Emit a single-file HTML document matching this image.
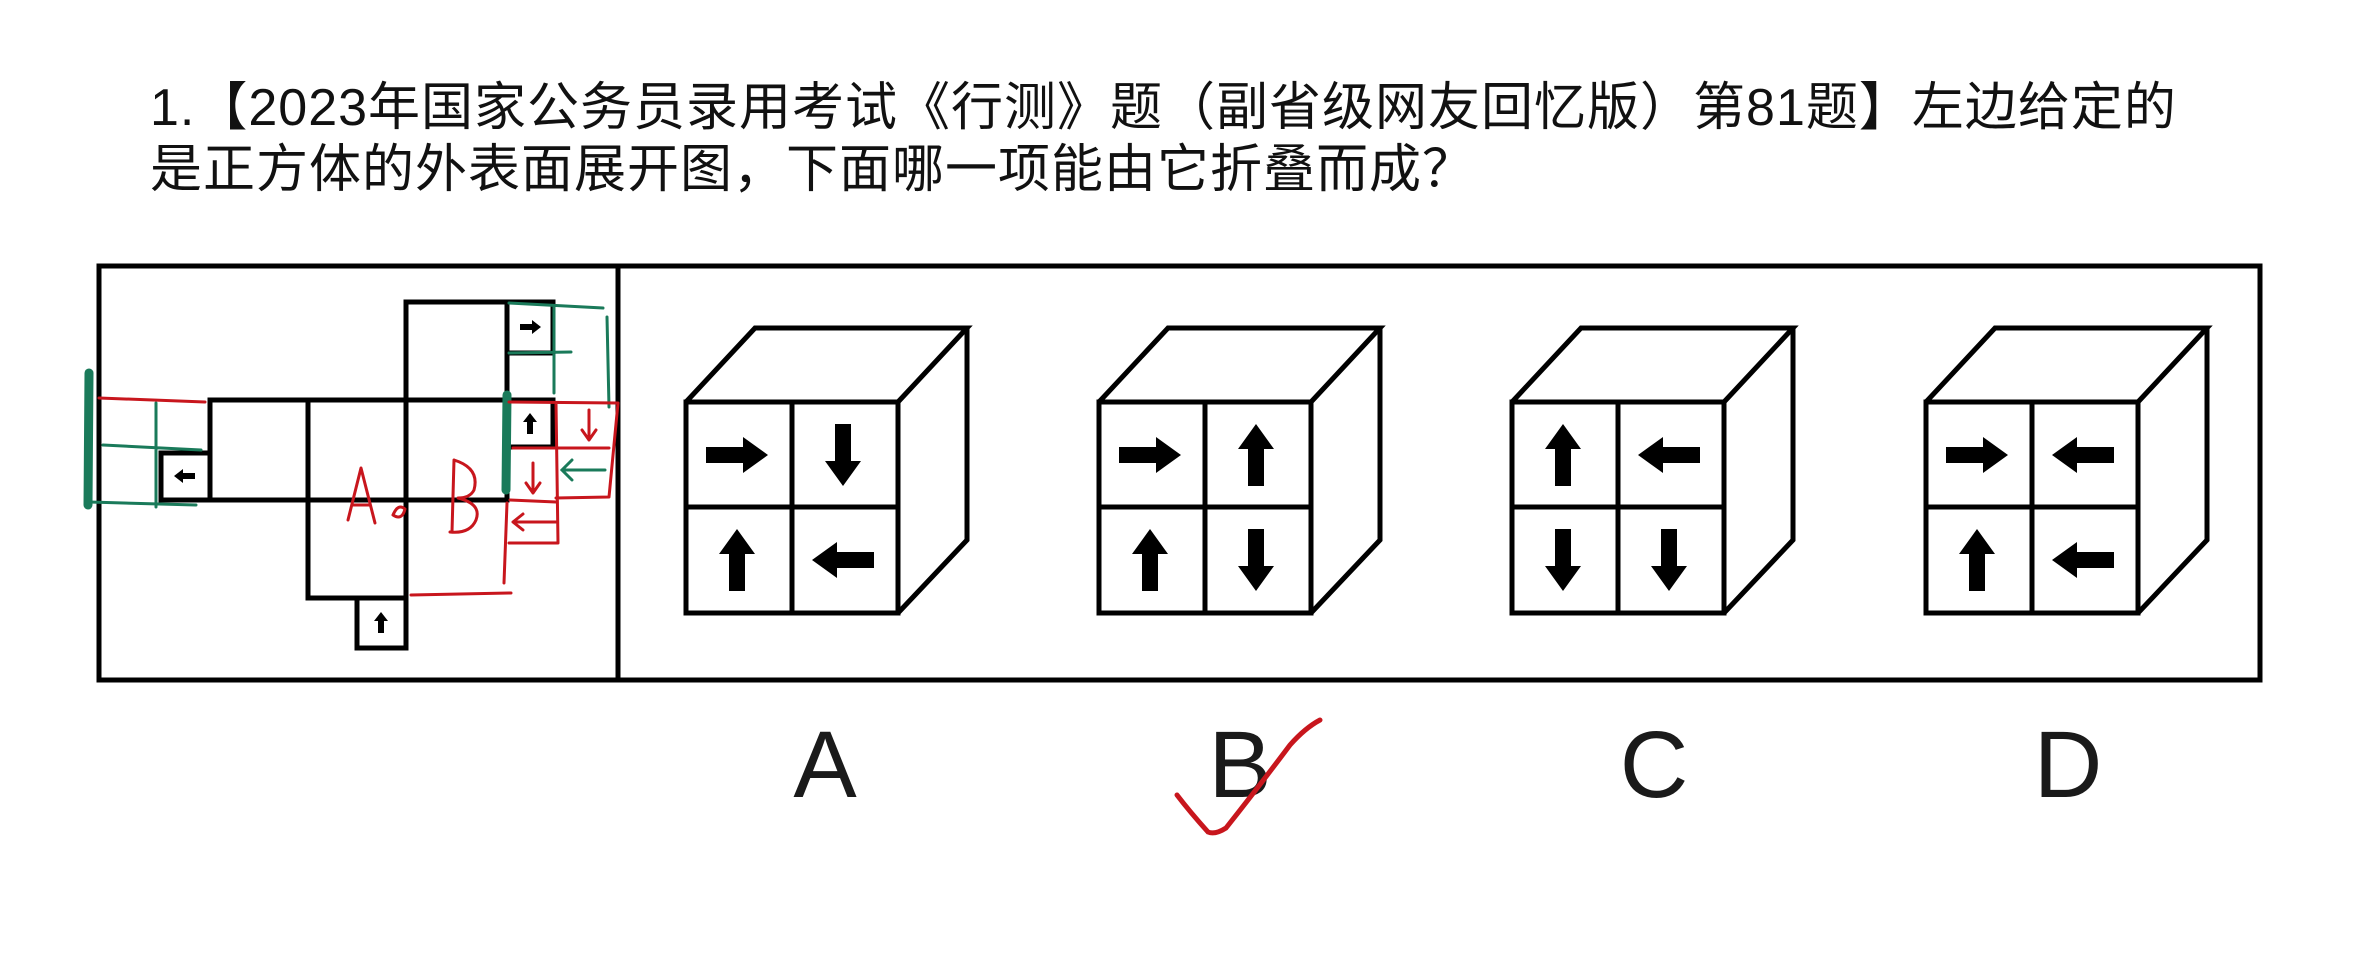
<!DOCTYPE html>
<html><head><meta charset="utf-8"><style>
html,body{margin:0;padding:0;background:#fff;width:2356px;height:970px;overflow:hidden}
.t{position:absolute;left:150px;font-family:"Liberation Sans","Noto Sans CJK SC",sans-serif;font-size:52px;color:#111;white-space:nowrap;line-height:62px;letter-spacing:1px}
svg{position:absolute;left:0;top:0}
.lbl{font-family:"Liberation Sans",sans-serif;font-size:95px;fill:#1a1a1a}
</style></head><body>
<div class="t" style="top:77px">1.【2023年国家公务员录用考试《行测》题（副省级网友回忆版）第81题】左边给定的</div>
<div class="t" style="top:139px">是正方体的外表面展开图，下面哪一项能由它折叠而成？</div>
<svg width="2356" height="970" viewBox="0 0 2356 970">
<defs>
<polygon id="ar" points="-31,-8 6,-8 6,-18 31,0 6,18 6,8 -31,8" fill="#000"/>
<polygon id="sa" points="-10,-3 2,-3 2,-7 11,0 2,7 2,3 -10,3" fill="#000"/>
</defs>
<g fill="none" stroke="#000" stroke-width="5">
<rect x="99" y="266" width="2161" height="414"/>
<line x1="618" y1="266" x2="618" y2="680"/>
<rect x="210" y="400" width="98" height="100"/>
<rect x="308" y="400" width="98" height="100"/>
<rect x="406" y="400" width="101" height="100"/>
<rect x="406" y="302" width="101" height="98"/>
<rect x="308" y="500" width="98" height="98"/>
<rect x="357" y="598" width="49" height="50"/>
<rect x="161" y="453" width="49" height="47"/>
<rect x="507" y="302" width="46" height="51"/>
<rect x="507" y="400" width="46" height="47"/>
</g>
<use href="#sa" transform="translate(185,476) rotate(180)"/>
<use href="#sa" transform="translate(530,327)"/>
<use href="#sa" transform="translate(530,424) rotate(-90)"/>
<use href="#sa" transform="translate(381,623) rotate(-90)"/>
<g fill="none" stroke="#1a7a5a" stroke-linecap="round">
<path d="M89,373 L88,505" stroke-width="9"/>
<path d="M507,395 L506,490" stroke-width="9"/>
<path d="M103,445 L201,450 M156,403 L156,507 M89,502 L196,505 M509,303 L603,308 M554,307 L554,393 M509,353 L571,352 M607,317 L609,407 M562,470 L605,470 M572,460 L562,470 L572,480" stroke-width="3"/>
</g>
<g fill="none" stroke="#c8161d" stroke-width="3" stroke-linecap="round" stroke-linejoin="round">
<path d="M99,398 L205,402"/>
<path d="M509,402 L618,403 L609,497 L556,498 M513,448 L609,448 M556,403 L558,543 L509,543 M507,503 L504,583 M411,595 L511,593 M510,500 L556,502"/>
<path d="M589,410 L589,440 M582,430 L589,440 L596,430"/>
<path d="M533,463 L533,493 M526,483 L533,493 L540,483"/>
<path d="M513,522 L556,522 M523,514 L513,522 L523,530"/>
<path d="M348,520 L361,468 L375,523 M352,505 L370,505"/>
<path d="M393,515 q5,-12 12,-6 q-3,12 -12,6"/>
<path d="M454,460 L452,532 M454,460 q26,8 20,30 q-4,8 -16,8 q24,6 18,22 q-6,14 -26,12"/>
</g>
<g fill="none" stroke="#000" stroke-width="5">
<g transform="translate(686,0)"><rect x="0" y="402" width="212" height="211"/><path d="M106,402 V613 M0,507 H212 M0,402 L69,328 H281 L212,402 M281,328 V540 L212,613"/></g>
<g transform="translate(1099,0)"><rect x="0" y="402" width="212" height="211"/><path d="M106,402 V613 M0,507 H212 M0,402 L69,328 H281 L212,402 M281,328 V540 L212,613"/></g>
<g transform="translate(1512,0)"><rect x="0" y="402" width="212" height="211"/><path d="M106,402 V613 M0,507 H212 M0,402 L69,328 H281 L212,402 M281,328 V540 L212,613"/></g>
<g transform="translate(1926,0)"><rect x="0" y="402" width="212" height="211"/><path d="M106,402 V613 M0,507 H212 M0,402 L69,328 H281 L212,402 M281,328 V540 L212,613"/></g>
</g>
<use href="#ar" transform="translate(737,455)"/>
<use href="#ar" transform="translate(843,455) rotate(90)"/>
<use href="#ar" transform="translate(737,560) rotate(-90)"/>
<use href="#ar" transform="translate(843,560) rotate(180)"/>
<use href="#ar" transform="translate(1150,455)"/>
<use href="#ar" transform="translate(1256,455) rotate(-90)"/>
<use href="#ar" transform="translate(1150,560) rotate(-90)"/>
<use href="#ar" transform="translate(1256,560) rotate(90)"/>
<use href="#ar" transform="translate(1563,455) rotate(-90)"/>
<use href="#ar" transform="translate(1669,455) rotate(180)"/>
<use href="#ar" transform="translate(1563,560) rotate(90)"/>
<use href="#ar" transform="translate(1669,560) rotate(90)"/>
<use href="#ar" transform="translate(1977,455)"/>
<use href="#ar" transform="translate(2083,455) rotate(180)"/>
<use href="#ar" transform="translate(1977,560) rotate(-90)"/>
<use href="#ar" transform="translate(2083,560) rotate(180)"/>
<text class="lbl" x="825" y="797" text-anchor="middle">A</text>
<text class="lbl" x="1240" y="797" text-anchor="middle">B</text>
<text class="lbl" x="1654" y="797" text-anchor="middle">C</text>
<text class="lbl" x="2068" y="797" text-anchor="middle">D</text>
<path d="M1177,795 Q1190,812 1208,832 Q1215,835 1226,828 Q1260,785 1290,745 Q1305,728 1320,720" fill="none" stroke="#c8161d" stroke-width="5" stroke-linecap="round"/>
</svg>
</body></html>
